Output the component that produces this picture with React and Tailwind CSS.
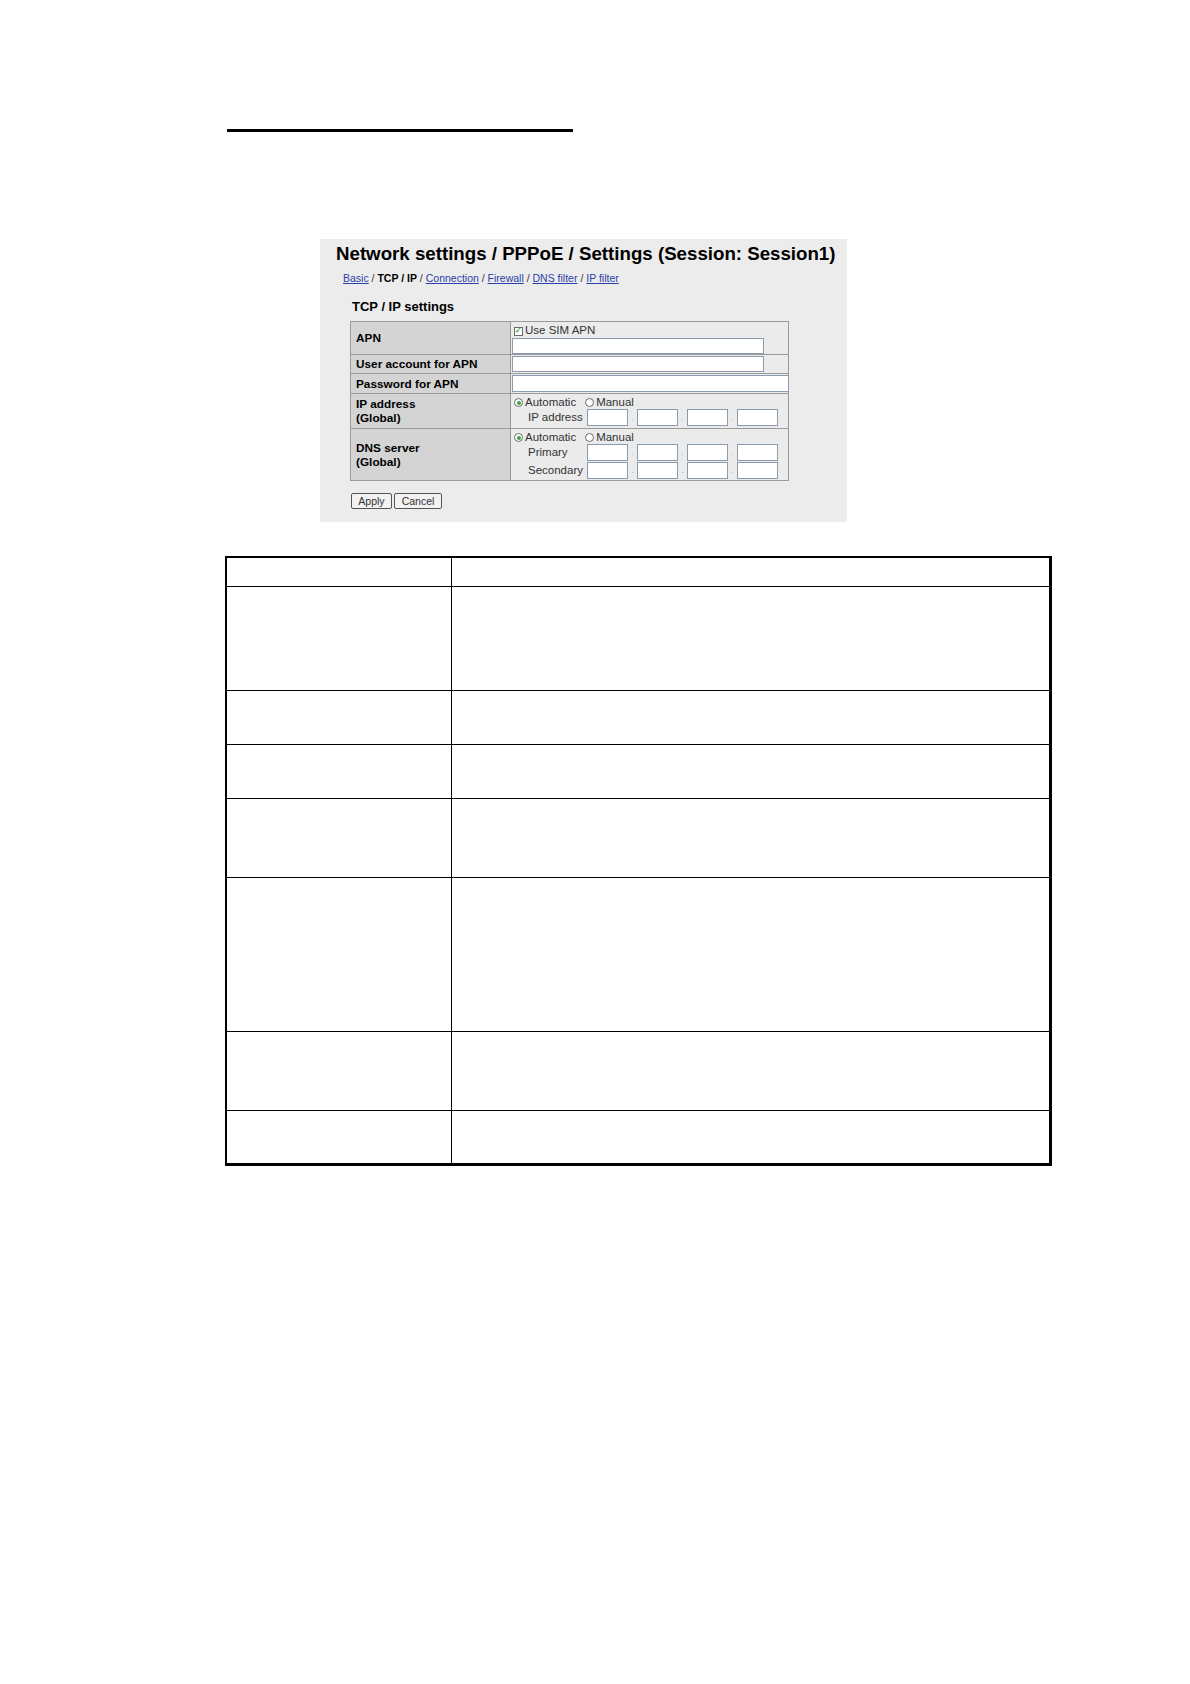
import React from 'react';

const font = { fontFamily: '"Liberation Sans", Arial, sans-serif' };

const Radio = ({ checked }) => (
  <span className="inline-flex items-center justify-center w-[9px] h-[9px] rounded-full border border-[#6b6b6b] bg-white mr-[2px]">
    {checked && <span className="w-[4px] h-[4px] rounded-full bg-[#3ba53b]" />}
  </span>
);

const Box = () => <span className="block w-[41px] h-[17px] bg-white border border-[#8a9bb0]" />;

const Dot = () => <span className="w-[9px] text-center text-[8px] leading-[17px] text-[#999]">.</span>;

const Quad = ({ label }) => (
  <div className="flex items-center">
    <span className="w-[75px] pl-[16px] text-[11.5px] text-[#333] leading-[17px] whitespace-nowrap">{label}</span>
    <div className="flex items-center">
      <Box /><Dot /><Box /><Dot /><Box /><Dot /><Box />
    </div>
  </div>
);

const RadioLine = () => (
  <div className="flex items-center h-[13px] pl-[2px] text-[11.5px] text-[#333]">
    <Radio checked />
    <span className="mr-[9px]">Automatic</span>
    <Radio />
    <span>Manual</span>
  </div>
);

const Label = ({ children }) => (
  <div className="w-[160px] shrink-0 bg-[#d4d4d4] border-r border-[#9a9a9a] flex items-center pl-[5px] text-[11.8px] leading-[14px] font-bold text-black">
    <div>{children}</div>
  </div>
);

const Panel = () => (
  <div className="ml-[320px] mt-[107px] w-[527px] h-[283px] bg-[#ececec] pt-[4px]" style={font}>
    <div className="pl-[16px] text-[18.7px] leading-[21px] font-bold text-black whitespace-nowrap">
      Network settings / PPPoE / Settings (Session: Session1)
    </div>
    <div className="pl-[23px] mt-[8px] text-[10.5px] leading-[12px] text-[#333] whitespace-nowrap">
      <a className="text-[#2b3fa8] underline">Basic</a> / <b className="text-black">TCP / IP</b> /{' '}
      <a className="text-[#2b3fa8] underline">Connection</a> /{' '}
      <a className="text-[#2b3fa8] underline">Firewall</a> /{' '}
      <a className="text-[#2b3fa8] underline">DNS filter</a> /{' '}
      <a className="text-[#2b3fa8] underline">IP filter</a>
    </div>
    <div className="pl-[32px] mt-[15px] text-[13px] leading-[15px] font-bold text-black">TCP / IP settings</div>

    <div className="ml-[30px] mt-[7px] w-[439px] border border-[#9a9a9a] bg-[#ebebeb]">
      <div className="flex h-[33px] border-b border-[#9a9a9a]">
        <Label>APN</Label>
        <div className="flex-1 pl-[1px] pt-[3px]">
          <div className="flex items-center h-[12px] pl-[2px] text-[11.5px] text-[#333]">
            <span className="inline-flex items-center justify-center w-[9px] h-[9px] border border-[#6b6b6b] bg-white mr-[2px] text-[8px] leading-none text-[#3ba53b] font-bold">✓</span>
            Use SIM APN
          </div>
          <div className="mt-[1px] w-[252px] h-[16px] bg-white border border-[#8a9bb0]" />
        </div>
      </div>
      <div className="flex h-[19px] border-b border-[#9a9a9a]">
        <Label>User account for APN</Label>
        <div className="flex-1 pl-[1px] pt-[1px]">
          <div className="w-[252px] h-[16px] bg-white border border-[#8a9bb0]" />
        </div>
      </div>
      <div className="flex h-[20px] border-b border-[#9a9a9a]">
        <Label>Password for APN</Label>
        <div className="flex-1 pl-[1px] pt-[1px]">
          <div className="w-[277px] h-[17px] bg-white border border-[#8a9bb0]" />
        </div>
      </div>
      <div className="flex h-[35px] border-b border-[#9a9a9a]">
        <Label>IP address<br />(Global)</Label>
        <div className="flex-1 pl-[1px] pt-[2px]">
          <RadioLine />
          <Quad label="IP address" />
        </div>
      </div>
      <div className="flex h-[51px]">
        <Label>DNS server<br />(Global)</Label>
        <div className="flex-1 pl-[1px] pt-[2px]">
          <RadioLine />
          <Quad label="Primary" />
          <div className="mt-[1px]"><Quad label="Secondary" /></div>
        </div>
      </div>
    </div>

    <div className="ml-[31px] mt-[12px] flex gap-[2px]">
      <button className="w-[41px] h-[16px] border border-[#555] rounded-[2px] bg-[#f2f2f2] text-[10.5px] leading-[14px] text-[#333]">Apply</button>
      <button className="w-[48px] h-[16px] border border-[#555] rounded-[2px] bg-[#f2f2f2] text-[10.5px] leading-[14px] text-[#333]">Cancel</button>
    </div>
  </div>
);

const rows = [28, 103, 53, 53, 78, 153, 78, 52];

export default function App() {
  return (
    <div className="w-[1190px] h-[1684px] bg-white overflow-hidden" style={font}>
      <div className="ml-[227px] pt-[129px]">
        <div className="w-[346px] h-[3px] bg-black" />
      </div>
      <Panel />
      <div className="ml-[225px] mt-[34px] w-[827px] border-l-2 border-t-2 border-r-[3px] border-b-[3px] border-black">
        {rows.map((h, i) => (
          <div
            key={i}
            className={`flex ${i < rows.length - 1 ? 'border-b border-black' : ''}`}
            style={{ height: h + (i < rows.length - 1 ? 1 : 0) }}
          >
            <div className="w-[225px] shrink-0 border-r border-black" />
            <div className="flex-1" />
          </div>
        ))}
      </div>
    </div>
  );
}
